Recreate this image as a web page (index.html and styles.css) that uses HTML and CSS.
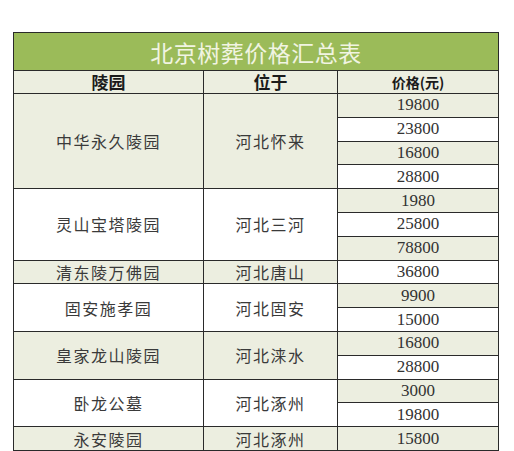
FILE: index.html
```html
<!DOCTYPE html>
<html lang="zh">
<head>
<meta charset="utf-8">
<link rel="stylesheet" href="styles.css">
</head>
<body>
<table class="price-table">
  <colgroup>
    <col class="c1"><col class="c2"><col class="c3">
  </colgroup>
  <thead>
    <tr class="title-row"><th colspan="3">北京树葬价格汇总表</th></tr>
    <tr class="head-row"><th>陵园</th><th>位于</th><th class="price-head">价格(元)</th></tr>
  </thead>
  <tbody>
    <tr><td rowspan="4" class="name light">中华永久陵园</td><td rowspan="4" class="loc light">河北怀来</td><td class="num light">19800</td></tr>
    <tr><td class="num">23800</td></tr>
    <tr><td class="num light">16800</td></tr>
    <tr><td class="num">28800</td></tr>
    <tr><td rowspan="3" class="name">灵山宝塔陵园</td><td rowspan="3" class="loc">河北三河</td><td class="num light">1980</td></tr>
    <tr><td class="num">25800</td></tr>
    <tr><td class="num light">78800</td></tr>
    <tr><td class="name light">清东陵万佛园</td><td class="loc light">河北唐山</td><td class="num">36800</td></tr>
    <tr><td rowspan="2" class="name">固安施孝园</td><td rowspan="2" class="loc">河北固安</td><td class="num light">9900</td></tr>
    <tr><td class="num">15000</td></tr>
    <tr><td rowspan="2" class="name light">皇家龙山陵园</td><td rowspan="2" class="loc light">河北涞水</td><td class="num light">16800</td></tr>
    <tr><td class="num">28800</td></tr>
    <tr><td rowspan="2" class="name">卧龙公墓</td><td rowspan="2" class="loc">河北涿州</td><td class="num light">3000</td></tr>
    <tr><td class="num">19800</td></tr>
    <tr><td class="name light">永安陵园</td><td class="loc light">河北涿州</td><td class="num light">15800</td></tr>
  </tbody>
</table>
</body>
</html>
```
FILE: styles.css
```css
html, body {
  margin: 0;
  padding: 0;
  background: #ffffff;
}
body {
  padding: 32px 0 0 13px;
}
.price-table {
  border-collapse: collapse;
  width: 485px;
  table-layout: fixed;
  font-family: "Noto Sans CJK SC", "Liberation Serif", serif;
  color: #333333;
  border: 1.5px solid #2a2a2a;
}
.c1 { width: 190px; }
.c2 { width: 134px; }
.c3 { width: 161px; }
.price-table th,
.price-table td {
  border: 1px solid #2a2a2a;
  padding: 0;
  text-align: center;
  vertical-align: middle;
  line-height: 20px;
}
.title-row th {
  background: #9bbb59;
  color: #f1f4e2;
  font-size: 23px;
  font-weight: 400;
  letter-spacing: 0.5px;
  height: 37px;
  border-bottom: 1.5px solid #2a2a2a;
}
.head-row th {
  background: #eceee0;
  color: #1a1a1a;
  font-size: 17px;
  font-weight: 700;
  height: 22px;
}
.head-row .price-head {
  font-size: 14px;
}
.price-table tbody td {
  height: 22.8px;
  background: #ffffff;
}
.price-table tbody td.light {
  background: #eceee0;
}
.name, .loc {
  font-size: 16px;
  letter-spacing: 1.5px;
  color: #3a3a3a;
}
.num {
  font-family: "Liberation Serif", "DejaVu Serif", serif;
  font-size: 17px;
  color: #333333;
}
```
